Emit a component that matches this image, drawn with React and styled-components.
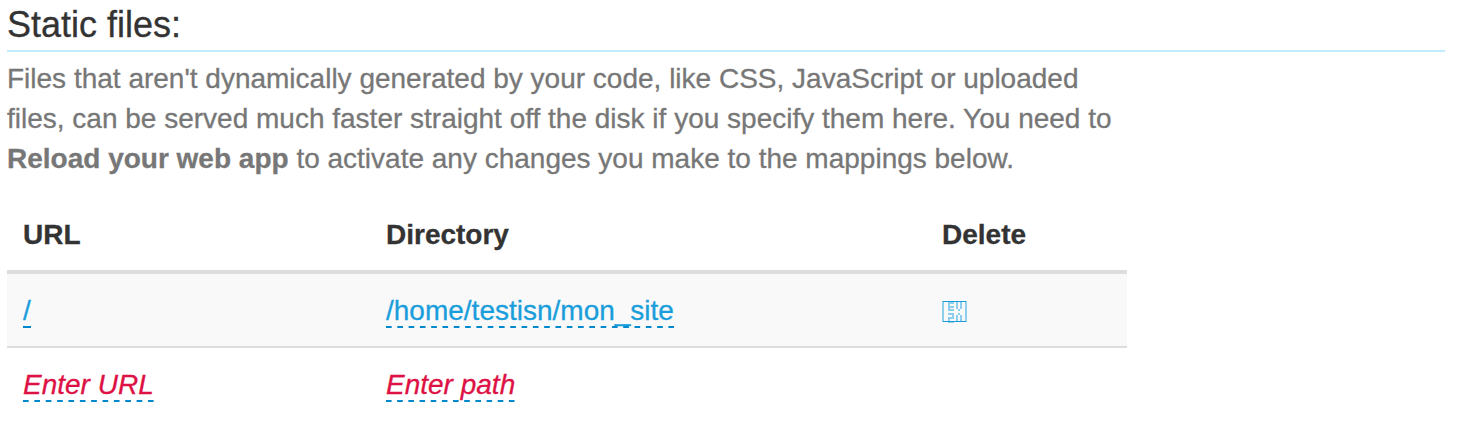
import React from "react";
import styled, { createGlobalStyle } from "styled-components";

const GlobalStyle = createGlobalStyle`
  body {
    margin: 0;
    background: #fff;
    color: #333;
    font: 28px/40px "Liberation Sans", Arial, sans-serif;
    -webkit-text-stroke: 0.3px currentColor;
  }
`;

const Page = styled.main`
  padding: 0 19px 0 7px;
`;

const Heading = styled.h2`
  margin: 0 0 7px;
  padding: 5px 0 5px;
  border-bottom: 2px solid #bfedff;
  font-size: 36px;
  font-weight: 400;
  line-height: 40px;
`;

const Intro = styled.p`
  width: 1120px;
  margin: 0 0 19px;
  color: #777;
`;

const Table = styled.table`
  width: 1120px;
  table-layout: fixed;
  border-collapse: separate;
  border-spacing: 0;
`;

const HeadCell = styled.th`
  width: ${(p) => p.$width || "auto"};
  box-sizing: border-box;
  padding: 17px 16px 15px;
  border-bottom: 4px solid #ddd;
  text-align: left;
`;

const Row = styled.tr`
  background: ${(p) => (p.$striped ? "#f9f9f9" : "transparent")};
`;

const Cell = styled.td`
  height: 40px;
  padding: 17px 16px 15px;
  border-bottom: ${(p) => (p.$last ? "0" : "2px solid #ddd")};
`;

const Editable = styled.a`
  padding-bottom: 2px;
  color: ${(p) => (p.$empty ? "#dd1144" : "#1a9edb")};
  font-style: ${(p) => (p.$empty ? "italic" : "normal")};
  background: linear-gradient(90deg, #0088cc ${(p) => (p.$short ? "100%" : "6px")}, transparent 0)
    left bottom / ${(p) => p.$pitch || "11.3px"} 2px repeat-x;
  text-decoration: none;
`;

const GlyphBox = styled.svg`
  display: block;
`;

const DeleteIcon = () => (
  <GlyphBox width="26" height="24" viewBox="0 0 26 24" shapeRendering="crispEdges">
    <path d="M0 2h2v21h-2zM23 2h2v21h-2z" fill="#8ccfec" />
    <path
      d="M6 3h6v2h-4v2h4v2h-4v1h4v2h-6zM14 3h2v7h-2zM18 3h2v7h-2zM16 10h2v2h-2zM6 14h6v6h-4v2h4v2h-6v-6h4v-2h-4zM16 14h2v2h-2zM14 16h2v7h-2zM18 16h2v7h-2z"
      fill="#8ccfec"
    />
    <path d="M1 2h23v1h-23zM1 22h23v1h-23z" fill="#1a9edb" />
  </GlyphBox>
);

export default function App() {
  return (
    <>
      <GlobalStyle />
      <Page>
        <Heading>Static files:</Heading>
        <Intro>
          Files that aren't dynamically generated by your code, like CSS, JavaScript or uploaded
          files, can be served much faster straight off the disk if you specify them here. You need
          to <strong>Reload your web app</strong> to activate any changes you make to the mappings
          below.
        </Intro>
        <Table>
          <thead>
            <tr>
              <HeadCell $width="363px">URL</HeadCell>
              <HeadCell $width="556px">Directory</HeadCell>
              <HeadCell>Delete</HeadCell>
            </tr>
          </thead>
          <tbody>
            <Row $striped>
              <Cell><Editable $short>/</Editable></Cell>
              <Cell><Editable>/home/testisn/mon_site</Editable></Cell>
              <Cell><DeleteIcon /></Cell>
            </Row>
            <Row>
              <Cell $last><Editable $empty $pitch="11.36px">Enter URL</Editable></Cell>
              <Cell $last><Editable $empty $pitch="11.18px">Enter path</Editable></Cell>
              <Cell $last />
            </Row>
          </tbody>
        </Table>
      </Page>
    </>
  );
}
